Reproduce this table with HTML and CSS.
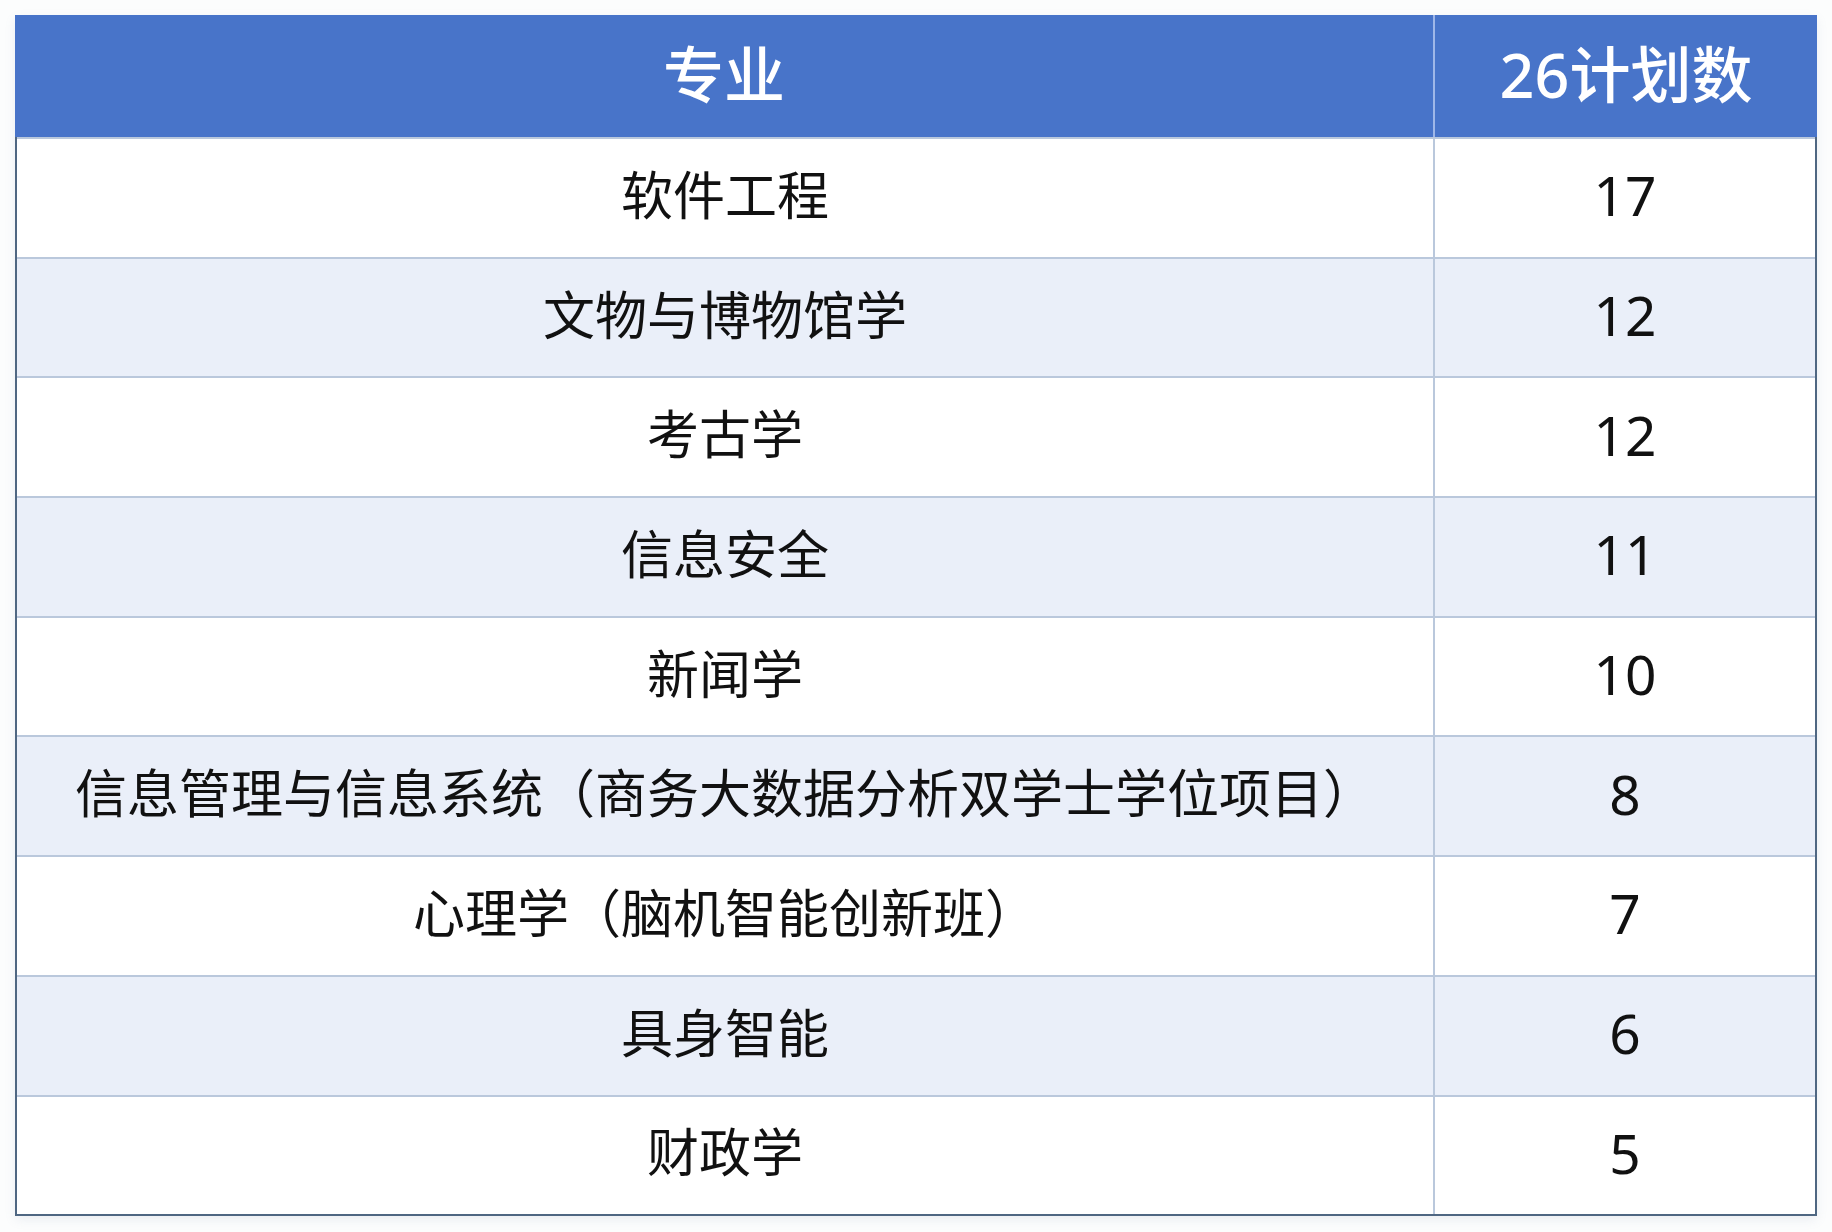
FILE: index.html
```html
<!DOCTYPE html>
<html lang="zh-CN">
<head>
<meta charset="utf-8">
<title>26计划数</title>
<link rel="stylesheet" href="styles.css">
</head>
<body>
<div class="page">
  <div class="plan-table">
    <div class="row head">
      <div class="cell major">专业</div>
      <div class="cell num">26计划数</div>
    </div>
    <div class="row">
      <div class="cell major">软件工程</div>
      <div class="cell num">17</div>
    </div>
    <div class="row alt">
      <div class="cell major">文物与博物馆学</div>
      <div class="cell num">12</div>
    </div>
    <div class="row">
      <div class="cell major">考古学</div>
      <div class="cell num">12</div>
    </div>
    <div class="row alt">
      <div class="cell major">信息安全</div>
      <div class="cell num">11</div>
    </div>
    <div class="row">
      <div class="cell major">新闻学</div>
      <div class="cell num">10</div>
    </div>
    <div class="row alt">
      <div class="cell major">信息管理与信息系统（商务大数据分析双学士学位项目）</div>
      <div class="cell num">8</div>
    </div>
    <div class="row">
      <div class="cell major">心理学（脑机智能创新班）</div>
      <div class="cell num">7</div>
    </div>
    <div class="row alt">
      <div class="cell major">具身智能</div>
      <div class="cell num">6</div>
    </div>
    <div class="row">
      <div class="cell major">财政学</div>
      <div class="cell num">5</div>
    </div>
  </div>
</div>
</body>
</html>
```

FILE: styles.css
```css
* { box-sizing: border-box; }

html, body {
  margin: 0;
  padding: 0;
  background: #fcfdfd;
}

body {
  font-family: "Noto Sans", "Noto Sans CJK SC", sans-serif;
  color: #111111;
}

.page {
  width: 1832px;
  height: 1232px;
  padding: 15px 15px 0 15px;
}

.plan-table {
  width: 1802px;
  border-left: 2px solid #4f6782;
  border-right: 2px solid #4f6782;
  border-bottom: 2px solid #4f6782;
  background: #ffffff;
  box-shadow: 0 4px 10px rgba(120, 140, 170, 0.12);
}

.row {
  display: grid;
  grid-template-columns: 1418px 1fr;
  height: 119.7px;
  border-top: 2px solid #bac8dc;
  background: #ffffff;
}

.row.alt {
  background: #eaeff9;
}

.row.head {
  height: 122px;
  border-top: none;
  margin: 0 -2px;
  background: #4874c9;
  color: #ffffff;
  grid-template-columns: 1420px 1fr;
}

.cell {
  display: flex;
  align-items: center;
  justify-content: center;
  font-size: 52px;
  line-height: 1;
  white-space: nowrap;
  padding-bottom: 6px;
}

.cell.major {
  border-right: 2px solid #bac8dc;
}

.cell.num {
  font-size: 55px;
}

.row.head .cell {
  font-size: 61px;
  font-weight: 500;
  padding-bottom: 4px;
}

.row.head .cell.major {
  border-right: 2px solid #9fb7e8;
}
```
